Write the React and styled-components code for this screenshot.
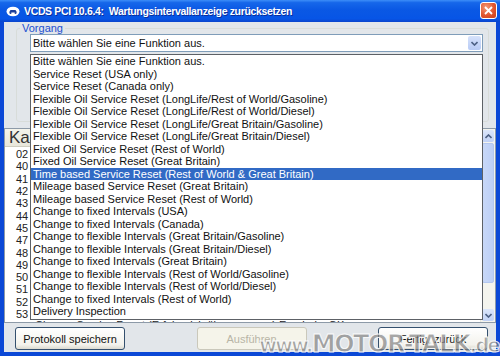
import React from "react";
import styled, { createGlobalStyle } from "styled-components";

const GlobalStyle = createGlobalStyle`
  html, body {
    margin: 0;
    padding: 0;
  }
  body {
    width: 500px;
    height: 356px;
    overflow: hidden;
    font-family: "Liberation Sans", Arial, sans-serif;
  }
`;

const Window = styled.div`
  position: relative;
  width: 500px;
  height: 356px;
  display: flex;
  flex-direction: column;
  background: #0b48d6;
  overflow: hidden;
`;

const TitleBar = styled.div`
  height: 22px;
  display: flex;
  align-items: center;
  gap: 4px;
  padding: 0 3px 0 6px;
  background: linear-gradient(
    to bottom,
    #3d8ef8 0%,
    #1667ea 12%,
    #0a58e4 45%,
    #0755e6 85%,
    #0a44cc 100%
  );
`;

const TitleText = styled.div`
  flex: 1;
  color: #fff;
  font-family: "Liberation Sans", Arial, sans-serif;
  font-weight: bold;
  font-size: 10.5px;
  letter-spacing: -0.35px;
  text-shadow: 1px 1px 0 #0a2f9c;
  white-space: pre;
`;

const CloseButton = styled.div`
  width: 15px;
  height: 15px;
  border: 1px solid #fff;
  border-radius: 3px;
  background: radial-gradient(circle at 35% 30%, #f29a78 0%, #e0552e 55%, #c8411c 100%);
  display: flex;
  align-items: center;
  justify-content: center;
  margin-bottom: 1px;
`;

const Client = styled.div`
  position: relative;
  flex: 1;
  margin: 0 4px 4px 4px;
  background: #e2e6ea;
  display: flex;
  flex-direction: column;
`;

const GroupBox = styled.fieldset`
  margin: 0 7px 0 12px;
  padding: 0 5px 0 13px;
  height: 100px;
  box-sizing: border-box;
  border: 1px solid #d8dcd9;
  border-radius: 3px;
`;

const Legend = styled.legend`
  margin-left: -10px;
  padding: 0 2px;
  font-size: 11px;
  line-height: 13px;
  color: #1b4fd0;
`;

const Combo = styled.div`
  height: 18px;
  margin-top: -1px;
  box-sizing: border-box;
  border: 1px solid #7f9db9;
  background: #fff;
  display: flex;
  align-items: center;
  font-size: 11px;
  color: #111;
  padding-left: 2px;
`;

const ComboText = styled.div`
  flex: 1;
`;

const ComboButton = styled.div`
  width: 13px;
  height: 14px;
  margin-right: 1px;
  border-radius: 2px;
  background: linear-gradient(to bottom, #d6e2fb, #b8cbf5);
  display: flex;
  align-items: center;
  justify-content: center;
`;

const Table = styled.div`
  margin-top: 6px;
  height: 195px;
  box-sizing: border-box;
  border: 1px solid #8d9aa8;
  background: #fff;
  display: flex;
`;

const TableBody = styled.div`
  flex: 1;
  overflow: hidden;
  display: flex;
  flex-direction: column;
`;

const HeaderRow = styled.div`
  height: 17px;
  flex: none;
  display: flex;
  align-items: center;
  background: linear-gradient(to bottom, #f4f3ea, #e8e6da);
  border-bottom: 1px solid #cfcdbf;
  font-size: 17px;
  color: #333;
`;

const HeaderCell = styled.div`
  width: ${(p) => p.$w}px;
  padding-left: ${(p) => p.$pad}px;
  white-space: nowrap;
`;

const Row = styled.div`
  height: 12.3px;
  flex: none;
  display: flex;
  align-items: center;
  font-size: 11px;
  color: #222;
`;

const NumCell = styled.div`
  width: 26px;
  padding-left: 11px;
  box-sizing: border-box;
  padding-top: 2px;
`;

const TextCell = styled.div`
  padding-left: 4px;
  white-space: nowrap;
`;

const ScrollBar = styled.div`
  width: 14px;
  flex: none;
  display: flex;
  flex-direction: column;
  background: #f4f4ee;
  border-left: 1px solid #e8e8e0;
`;

const ScrollArrow = styled.div`
  height: 12px;
  flex: none;
  margin: 1px;
  border-radius: 2px;
  background: linear-gradient(to bottom, #dbe6fb, #c1d2f6);
  display: flex;
  align-items: center;
  justify-content: center;
`;

const ScrollThumb = styled.div`
  height: 138px;
  flex: none;
  margin: 0 1px;
  border: 1px solid #b3c7ef;
  border-radius: 2px;
  background: linear-gradient(to right, #c8d8f8, #bccff6);
`;

const ScrollTrack = styled.div`
  flex: 1;
`;

const ButtonRow = styled.div`
  flex: 1;
  display: flex;
  justify-content: space-between;
  align-items: flex-start;
  padding: 4px 8px 0 11px;
`;

const Button = styled.div`
  width: 110px;
  height: 23px;
  box-sizing: border-box;
  border: 1px solid ${(p) => (p.$disabled ? "#cac8bb" : "#34506e")};
  border-radius: 3px;
  background: ${(p) =>
    p.$disabled
      ? "#f5f4ea"
      : "linear-gradient(to bottom, #ffffff, #f3f2ec 80%, #dcdad0)"};
  color: ${(p) => (p.$disabled ? "#b8b5a6" : "#111")};
  font-size: 11px;
  display: flex;
  align-items: center;
  justify-content: center;
`;

const DropList = styled.div`
  position: absolute;
  left: 26px;
  top: 32px;
  width: 453px;
  box-sizing: border-box;
  border: 1px solid #5d6166;
  background: #fff;
  padding-bottom: 1px;
`;

const Item = styled.div`
  height: 12.5px;
  line-height: 12.5px;
  padding-left: 2px;
  font-size: 11px;
  white-space: nowrap;
  color: ${(p) => (p.$active ? "#fff" : "#111")};
  background: ${(p) => (p.$active ? "#316ac5" : "transparent")};
`;

const Watermark = styled.div`
  position: absolute;
  right: 1px;
  bottom: -2px;
  font-family: "DejaVu Sans", sans-serif;
  font-weight: bold;
  letter-spacing: -1.5px;
  color: rgba(130, 130, 130, 0.7);
  -webkit-text-stroke: 1px rgba(255, 255, 255, 0.9);
  white-space: nowrap;
  pointer-events: none;
`;

const WmSmall = styled.span`
  font-size: 19px;
`;

const WmBig = styled.span`
  font-size: 24px;
`;

const functions = [
  "Bitte wählen Sie eine Funktion aus.",
  "Service Reset (USA only)",
  "Service Reset (Canada only)",
  "Flexible Oil Service Reset (LongLife/Rest of World/Gasoline)",
  "Flexible Oil Service Reset (LongLife/Rest of World/Diesel)",
  "Flexible Oil Service Reset (LongLife/Great Britain/Gasoline)",
  "Flexible Oil Service Reset (LongLife/Great Britain/Diesel)",
  "Fixed Oil Service Reset (Rest of World)",
  "Fixed Oil Service Reset (Great Britain)",
  "Time based Service Reset (Rest of World & Great Britain)",
  "Mileage based Service Reset (Great Britain)",
  "Mileage based Service Reset (Rest of World)",
  "Change to fixed Intervals (USA)",
  "Change to fixed Intervals (Canada)",
  "Change to flexible Intervals (Great Britain/Gasoline)",
  "Change to flexible Intervals (Great Britain/Diesel)",
  "Change to fixed Intervals (Great Britain)",
  "Change to flexible Intervals (Rest of World/Gasoline)",
  "Change to flexible Intervals (Rest of World/Diesel)",
  "Change to fixed Intervals (Rest of World)",
  "Delivery Inspection",
];

const channels = [
  ["02", "Service Inspektion Einheiten"],
  ["40", "Strecke seit Service"],
  ["41", "Zeit seit Service"],
  ["42", "Untergrenze Strecke bis Service"],
  ["43", "Obergrenze Strecke bis Service"],
  ["44", "Obergrenze Zeit bis Service"],
  ["45", "Ölqualität"],
  ["47", "Rußeintrag"],
  ["48", "Verschleiß"],
  ["49", "Minimale Strecke Service"],
  ["50", "Strecke bis Service"],
  ["51", "Zeit bis Service"],
  ["52", "Maximale Zeit"],
  ["53", "Minimale Zeit"],
  ["54", "Change Service Reset     (Erfolgreich übernommen)        Ergebnis:  OK"],
];

const TitleIcon = () => (
  <svg width="14" height="11" viewBox="0 0 14 11">
    <ellipse cx="7" cy="5.5" rx="6.5" ry="4.8" fill="#fff" />
    <path d="M3 6.5 L4.5 4 L9.5 4 L11 6.5 Z" fill="#1c3f9a" />
    <circle cx="4.5" cy="7" r="1" fill="#1c3f9a" />
    <circle cx="9.5" cy="7" r="1" fill="#1c3f9a" />
  </svg>
);

const Chevron = ({ up }) => (
  <svg width="7" height="5" viewBox="0 0 7 5">
    <path
      d={up ? "M0.5 4 L3.5 1 L6.5 4" : "M0.5 1 L3.5 4 L6.5 1"}
      fill="none"
      stroke="#4d6185"
      strokeWidth="1.6"
    />
  </svg>
);

export default function App() {
  return (
    <>
      <GlobalStyle />
      <Window>
        <TitleBar>
          <TitleIcon />
          <TitleText>{"VCDS PCI 10.6.4:  Wartungsintervallanzeige zurücksetzen"}</TitleText>
          <CloseButton>
            <svg width="9" height="9" viewBox="0 0 9 9">
              <path d="M1 1 L8 8 M8 1 L1 8" stroke="#fff" strokeWidth="1.8" />
            </svg>
          </CloseButton>
        </TitleBar>
        <Client>
          <GroupBox>
            <Legend>Vorgang</Legend>
            <Combo>
              <ComboText>Bitte wählen Sie eine Funktion aus.</ComboText>
              <ComboButton>
                <Chevron />
              </ComboButton>
            </Combo>
          </GroupBox>
          <Table>
            <TableBody>
              <HeaderRow>
                <HeaderCell $w={26} $pad={4}>Kanal</HeaderCell>
                <HeaderCell $w={300} $pad={6}>Beschreibung</HeaderCell>
              </HeaderRow>
              {channels.map(([num, text]) => (
                <Row key={num}>
                  <NumCell>{num}</NumCell>
                  <TextCell>{text}</TextCell>
                </Row>
              ))}
            </TableBody>
            <ScrollBar>
              <ScrollArrow>
                <Chevron up />
              </ScrollArrow>
              <ScrollThumb />
              <ScrollTrack />
              <ScrollArrow>
                <Chevron />
              </ScrollArrow>
            </ScrollBar>
          </Table>
          <ButtonRow>
            <Button>Protokoll speichern</Button>
            <Button $disabled>Ausführen</Button>
            <Button>Fertig, zurück</Button>
          </ButtonRow>
          <DropList>
            {functions.map((f, i) => (
              <Item key={f} $active={i === 9}>
                {f}
              </Item>
            ))}
          </DropList>
        </Client>
        <Watermark>
          <WmSmall>www.</WmSmall>
          <WmBig>MOTOR-TALK</WmBig>
          <WmSmall>.de</WmSmall>
        </Watermark>
      </Window>
    </>
  );
}
